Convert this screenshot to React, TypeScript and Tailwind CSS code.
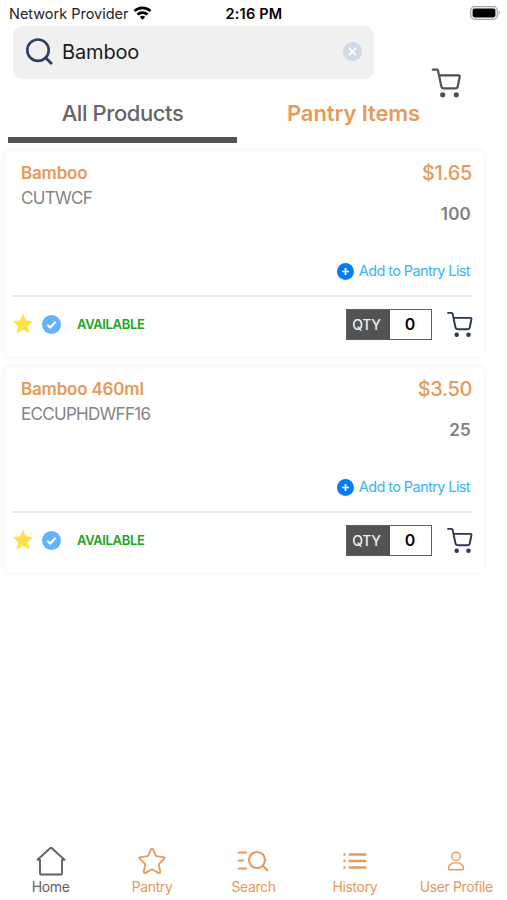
import { useState } from 'react';
import clsx from 'clsx';

type Product = {
  name: string;
  code: string;
  price: string;
  stock: number;
};

const products: Product[] = [
  { name: 'Bamboo', code: 'CUTWCF', price: '$1.65', stock: 100 },
  { name: 'Bamboo 460ml', code: 'ECCUPHDWFF16', price: '$3.50', stock: 25 },
];

function CartIcon({ className }: { className?: string }) {
  return (
    <svg viewBox="0 0 30 30" fill="none" stroke="currentColor" strokeWidth="2.2" className={className}>
      <path
        d="M1.2 1.6h4.2q.9 0 1.1.9l3.3 15.9q.4 2 2.4 2h11.8q2 0 2.3-2l1.9-9.8q.2-1.2-1-1.2H7.6"
        strokeLinejoin="round"
        strokeLinecap="round"
      />
      <circle cx="11.2" cy="26.8" r="2.6" fill="currentColor" stroke="none" />
      <circle cx="24.8" cy="26.8" r="2.6" fill="currentColor" stroke="none" />
    </svg>
  );
}

function WifiIcon() {
  return (
    <svg viewBox="0 0 18 14" fill="none" stroke="#000" strokeWidth="2.7" className="h-[14px] w-[19px]">
      <path d="M1 5.1a11.5 11.5 0 0 1 16 0" />
      <path d="M4 8.6a7.3 7.3 0 0 1 10 0" />
      <path d="M9 13.7 6.3 11a4 4 0 0 1 5.4 0Z" fill="#000" stroke="none" />
    </svg>
  );
}

function BatteryIcon() {
  return (
    <svg viewBox="0 0 31 14" className="h-[14px] w-[31px]">
      <rect x="0.7" y="0.7" width="26.6" height="12.6" rx="4" fill="#fff" stroke="#a6a6a6" strokeWidth="1.3" />
      <rect x="2.6" y="2.6" width="22.8" height="8.8" rx="2" />
      <path d="M28.7 4.8c1.6.4 1.6 4 0 4.4Z" fill="#a6a6a6" />
    </svg>
  );
}

function StatusBar() {
  return (
    <div className="grid h-[26px] grid-cols-3 items-center pl-[9px] pr-[6px]">
      <div className="flex items-center gap-[5px] text-[14.5px] tracking-[-0.02px] whitespace-nowrap text-[#222]">
        <span className="pt-[2px]">Network Provider</span>
        <WifiIcon />
      </div>
      <span className="pt-px pr-[2px] text-center text-[14.5px] font-semibold tracking-[0.2px] text-black">2:16 PM</span>
      <div className="flex justify-end">
        <BatteryIcon />
      </div>
    </div>
  );
}

function SearchHeader() {
  const [query, setQuery] = useState('Bamboo');

  return (
    <div className="flex h-[53px] items-start pl-[13px]">
      <div className="flex h-[53px] w-[361px] items-center rounded-[9px] bg-[#f0f0f0] pr-[12px] pb-[2px] pl-[13px]">
        <svg viewBox="0 0 28 28" fill="none" stroke="#2b4066" strokeWidth="2.6" className="h-7 w-7 shrink-0">
          <circle cx="12" cy="12.2" r="10.7" />
          <path d="m19.7 19.8 6.2 6.2" strokeWidth="3" />
        </svg>
        <input
          value={query}
          onChange={(e) => setQuery(e.target.value)}
          className="ml-[8px] min-w-0 flex-1 bg-transparent text-[20px] tracking-[-0.15px] text-[#1c1c1c] outline-none"
        />
        <button onClick={() => setQuery('')}>
          <svg viewBox="0 0 20 20" className="h-[19px] w-[19px]">
            <circle cx="10" cy="10" r="10" fill="#cfdae8" />
            <path d="m6.2 6.2 7.6 7.6m0-7.6-7.6 7.6" stroke="#fff" strokeWidth="2" />
          </svg>
        </button>
      </div>
      <CartIcon className="mt-[42px] ml-[57px] h-[30px] w-[31px] shrink-0 text-[#505050]" />
    </div>
  );
}

function Tabs() {
  return (
    <div className="flex h-[64px] pl-[8px]">
      <button className="flex h-full w-[229px] items-center justify-center border-b-[6px] border-[#545454] pt-[11px] text-[22px] font-medium tracking-[-0.42px] text-[#666]">
        All Products
      </button>
      <button className="flex h-full w-[233px] items-center justify-center border-b-[6px] border-transparent pt-[11px] text-[22px] font-semibold tracking-[-0.1px] text-[#e69a5b]">
        Pantry Items
      </button>
    </div>
  );
}

function ProductCard({ product }: { product: Product }) {
  return (
    <div className="flex h-[205px] w-[479px] flex-col rounded-[5px] bg-white pr-[12px] pl-[7px] shadow-[0_0_5px_2px_rgba(0,0,0,0.035)]">
      <div className="flex h-[146px] justify-between border-b-2 border-[#e6e6e6] pl-[9px]">
        <div className="pt-[9px]">
          <h3 className="text-[17px] leading-[26px] font-semibold tracking-[-0.2px] text-[#e69a5b]">
            {product.name}
          </h3>
          <p className="text-[17px] leading-[25px] tracking-[-0.7px] text-[#858585]">{product.code}</p>
        </div>
        <div className="flex flex-col items-end">
          <span className="mt-[9px] text-[20px] leading-[26px] font-medium tracking-[-0.35px] text-[#e69a5b]">
            {product.price}
          </span>
          <span className="mt-[16px] mr-[1px] text-[17px] leading-[24px] font-semibold tracking-[0.2px] text-[#808080]">
            {product.stock}
          </span>
          <button className="mt-[34px] mr-[2px] flex items-center gap-[5px] text-[14.5px] leading-[22px] tracking-[-0.6px] text-[#38b3f5]">
            <svg viewBox="0 0 18 18" className="h-[17px] w-[17px]">
              <circle cx="9" cy="9" r="9" fill="#087cf7" />
              <path d="M9 5.4v7.2M5.4 9h7.2" stroke="#fff" strokeWidth="1.8" />
            </svg>
            Add to Pantry List
          </button>
        </div>
      </div>

      <div className="flex h-[54px] items-center">
        <svg viewBox="0 0 24 24" fill="#fee04b" className="h-[22px] w-[22px]">
          <path
            d="m12 1.8 3 6.8 7.3.7-5.5 5 1.6 7.2-6.4-3.8-6.4 3.8 1.6-7.200-5.500-5 7.300-.7Z"
            stroke="#fee04b"
            strokeLinejoin="round"
          />
        </svg>
        <svg viewBox="0 0 20 20" fill="none" className="ml-[8px] h-[19px] w-[19px]">
          <circle cx="10" cy="10" r="10" fill="#62b3fa" />
          <path d="m5.6 10.3 3 2.9 5.8-6.1" stroke="#fff" strokeWidth="2.2" />
        </svg>
        <span className="ml-[16px] pt-px text-[13px] font-semibold tracking-[-0.35px] text-[#18a51c]">AVAILABLE</span>
        <div className="ml-auto flex h-[31px] w-[86px] border border-[#606060]">
          <span className="flex w-[43px] items-center justify-center bg-[#535353] pr-[4px] text-[14px] font-medium tracking-[-0.3px] text-[#eee]">
            QTY
          </span>
          <span className="flex flex-1 items-center justify-center pr-[1px] text-[16px] font-semibold text-black">
            0
          </span>
        </div>
        <CartIcon className="-mr-px ml-[15px] h-[27px] w-[26px] text-[#2b3557]" />
      </div>
    </div>
  );
}

function HomeIcon() {
  return (
    <svg viewBox="0 0 30 30" fill="none" stroke="currentColor" strokeWidth="1.9" className="h-[30px] w-[30px]">
      <path
        d="M4 13.7v13.2q0 1.6 1.6 1.6h18.8q1.6 0 1.6-1.6V13.7h2.5L15.900 2.200q-.9-.8-1.800 0L1.500 13.700Z"
        strokeLinejoin="round"
      />
    </svg>
  );
}

function StarIcon() {
  return (
    <svg viewBox="0 0 28 28" fill="none" stroke="currentColor" strokeWidth="1.8" className="h-[28px] w-[28px]">
      <path
        d="M12.900 2.600q1.100-2 2.200 0l3 6.600 7.400.9q2 .4.600 1.900l-5.400 5.100 1.500 7.500q.1 2.100-1.800 1.300L14 22.300l-6.400 3.600q-1.900.8-1.800-1.300l1.500-7.500L1.900 12q-1.400-1.500.6-1.900l7.400-.9Z"
        strokeLinejoin="round"
      />
    </svg>
  );
}

function SearchListIcon() {
  return (
    <svg
      viewBox="0 0 32 24"
      fill="none"
      stroke="currentColor"
      strokeWidth="2.2"
      strokeLinecap="round"
      className="h-[24px] w-[32px]"
    >
      <path d="M1.600 3.500h7.600M1.600 11.500h4.400M1.600 19.500h7.600" />
      <circle cx="20" cy="11" r="8" />
      <path d="m26 17 4.300 4.300" />
    </svg>
  );
}

function ListIcon() {
  return (
    <svg viewBox="0 0 24 18" fill="none" stroke="currentColor" strokeWidth="2.5" className="h-[18px] w-[24px]">
      <path d="M.5 2.500h2M.5 9h2M.5 15.500h2" />
      <path d="M6.700 2.500h15.600M6.700 9h15.600M6.700 15.500h15.600" strokeLinecap="round" />
    </svg>
  );
}

function UserIcon() {
  return (
    <svg viewBox="0 0 18 20" fill="none" stroke="currentColor" strokeWidth="1.4" className="h-[20px] w-[18px]">
      <circle cx="9" cy="5.4" r="4.2" />
      <path d="M1.500 17.600c0-8 15-8 15 0q0 1.200-1.200 1.200H2.700q-1.200 0-1.200-1.200Z" />
    </svg>
  );
}

const navItems = [
  { label: 'Home', icon: <HomeIcon /> },
  { label: 'Pantry', icon: <StarIcon /> },
  { label: 'Search', icon: <SearchListIcon /> },
  { label: 'History', icon: <ListIcon /> },
  { label: 'User Profile', icon: <UserIcon /> },
];

function BottomNav() {
  const [active, setActive] = useState('Home');

  return (
    <nav className="mt-auto grid grid-cols-5 pb-[4px]">
      {navItems.map((item) => (
        <button
          key={item.label}
          onClick={() => setActive(item.label)}
          className={clsx(
            'flex flex-col items-center text-[14px] leading-[18px] tracking-[-0.38px] whitespace-nowrap',
            active === item.label ? 'text-[#626262]' : 'text-[#e69a5b]',
          )}
        >
          <span className="flex h-[34px] items-center justify-center">{item.icon}</span>
          <span>{item.label}</span>
        </button>
      ))}
    </nav>
  );
}

export default function App() {
  return (
    <div className="flex h-[900px] w-[507px] flex-col overflow-hidden bg-white font-[Inter,sans-serif]">
      <StatusBar />
      <SearchHeader />
      <Tabs />
      <div className="flex flex-col gap-[11px] pt-[8px] pl-[5px]">
        {products.map((product) => (
          <ProductCard key={product.code} product={product} />
        ))}
      </div>
      <BottomNav />
    </div>
  );
}
